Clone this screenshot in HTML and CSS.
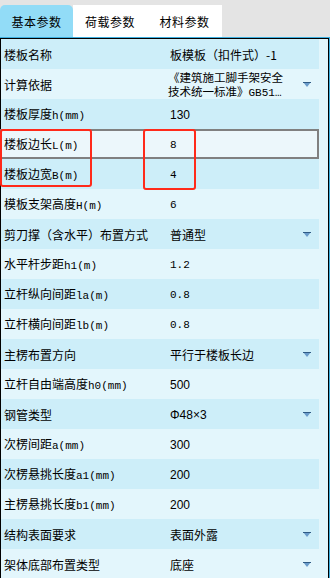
FILE: index.html
```html
<!DOCTYPE html>
<html>
<head>
<meta charset="utf-8">
<link rel="stylesheet" href="styles.css">
</head>
<body>
<div class="page">
  <div class="tabs">
    <div class="tab active">基本参数</div>
    <div class="tab">荷载参数</div>
    <div class="tab">材料参数</div>
  </div>
  <div class="frame">
    <div class="panel">
      <div class="row dark"><div class="label">楼板名称</div><div class="value">板模板（扣件式）-1</div></div>
      <div class="row light"><div class="label">计算依据</div><div class="value two"><div class="ln">《建筑施工脚手架安全</div><div class="ln">技术统一标准》<span class="m">GB51…</span></div></div><svg class="arrow" viewBox="0 0 8 5" width="8" height="5"><polygon points="0,0 8,0 4,5" fill="#6a9ccb"/><rect x="0" y="0" width="8" height="1" fill="#2f5b85"/></svg></div>
      <div class="row dark"><div class="label">楼板厚度<span class="m">h(mm)</span></div><div class="value s">130</div></div>
      <div class="row sel"><div class="label">楼板边长<span class="m">L(m)</span></div><div class="value m">8</div></div>
      <div class="row dark"><div class="label">楼板边宽<span class="m">B(m)</span></div><div class="value m">4</div></div>
      <div class="row light"><div class="label">模板支架高度<span class="m">H(m)</span></div><div class="value m">6</div></div>
      <div class="row dark"><div class="label">剪刀撑（含水平）布置方式</div><div class="value">普通型</div><svg class="arrow" viewBox="0 0 8 5" width="8" height="5"><polygon points="0,0 8,0 4,5" fill="#6a9ccb"/><rect x="0" y="0" width="8" height="1" fill="#2f5b85"/></svg></div>
      <div class="row light"><div class="label">水平杆步距<span class="m">h1(m)</span></div><div class="value m">1.2</div></div>
      <div class="row dark"><div class="label">立杆纵向间距<span class="m">la(m)</span></div><div class="value m">0.8</div></div>
      <div class="row light"><div class="label">立杆横向间距<span class="m">lb(m)</span></div><div class="value m">0.8</div></div>
      <div class="row dark"><div class="label">主楞布置方向</div><div class="value">平行于楼板长边</div><svg class="arrow" viewBox="0 0 8 5" width="8" height="5"><polygon points="0,0 8,0 4,5" fill="#6a9ccb"/><rect x="0" y="0" width="8" height="1" fill="#2f5b85"/></svg></div>
      <div class="row light"><div class="label">立杆自由端高度<span class="m">h0(mm)</span></div><div class="value s">500</div></div>
      <div class="row dark"><div class="label">钢管类型</div><div class="value s">Φ48×3</div><svg class="arrow" viewBox="0 0 8 5" width="8" height="5"><polygon points="0,0 8,0 4,5" fill="#6a9ccb"/><rect x="0" y="0" width="8" height="1" fill="#2f5b85"/></svg></div>
      <div class="row light"><div class="label">次楞间距<span class="m">a(mm)</span></div><div class="value s">300</div></div>
      <div class="row dark"><div class="label">次楞悬挑长度<span class="m">a1(mm)</span></div><div class="value s">200</div></div>
      <div class="row light"><div class="label">主楞悬挑长度<span class="m">b1(mm)</span></div><div class="value s">200</div></div>
      <div class="row dark"><div class="label">结构表面要求</div><div class="value">表面外露</div><svg class="arrow" viewBox="0 0 8 5" width="8" height="5"><polygon points="0,0 8,0 4,5" fill="#6a9ccb"/><rect x="0" y="0" width="8" height="1" fill="#2f5b85"/></svg></div>
      <div class="row light"><div class="label">架体底部布置类型</div><div class="value">底座</div><svg class="arrow" viewBox="0 0 8 5" width="8" height="5"><polygon points="0,0 8,0 4,5" fill="#6a9ccb"/><rect x="0" y="0" width="8" height="1" fill="#2f5b85"/></svg></div>
    </div>
  </div>
  <div class="mark mark-label"></div>
  <div class="mark mark-value"></div>
</div>
</body>
</html>
```
FILE: styles.css
```css
html, body {
  margin: 0;
  padding: 0;
}
body {
  background: #e4e4e4;
  font-family: "Noto Sans CJK SC", "Liberation Sans", sans-serif;
  font-size: 12px;
  color: #000;
  overflow: hidden;
}
.page {
  position: relative;
  width: 330px;
  height: 578px;
  overflow: hidden;
}
.tabs {
  display: flex;
  padding-top: 5px;
  height: 32px;
}
.tab {
  width: 74px;
  height: 32px;
  background: #fff;
  display: flex;
  align-items: center;
  justify-content: center;
  font-size: 12px;
  letter-spacing: 0.5px;
}
.tab.active {
  width: 73px;
  background: #92dcf7;
  border-radius: 5px 5px 0 0;
}
.tab:last-child {
  width: 75px;
}
.frame {
  border-top: 1px solid #3cafe0;
  border-right: 1px solid #3cafe0;
  width: 329px;
}
.panel {
  border: 1px solid #000;
  border-bottom: none;
  background: #e3f6fc;
  width: 327px;
  height: 560px;
}
.row {
  width: 318px;
  height: 30px;
  display: flex;
  align-items: center;
  box-sizing: border-box;
  padding-left: 3px;
  padding-right: 8px;
}
.row.dark { background: #cdeef9; }
.row.light { background: #e3f6fc; }
.row.sel {
  background: #ecf7fb;
  outline: 2px solid #808080;
  outline-offset: -2px;
  margin-left: -1px;
  width: 319px;
  padding-left: 4px;
}
.label {
  width: 166px;
  flex: none;
  white-space: nowrap;
  line-height: 16px;
  padding-top: 1px;
}
.value {
  flex: 1;
  white-space: nowrap;
  line-height: 16px;
  padding-top: 1px;
}
.value.two {
  display: flex;
  flex-direction: column;
  margin-left: -2px;
  padding-top: 0;
}
.ln {
  height: 14px;
  line-height: 14px;
  font-size: 11.5px;
}
.m {
  font-family: "Liberation Mono", "DejaVu Sans Mono", monospace;
  font-size: 11px;
}
.value.s {
  font-family: "Liberation Sans", sans-serif;
  font-size: 12px;
}
.arrow {
  flex: none;
  display: block;
}
.mark {
  position: absolute;
  border: 2.5px solid #ff2a1a;
  border-radius: 3px;
  box-sizing: border-box;
}
.mark-label {
  left: 0;
  top: 129px;
  width: 92px;
  height: 58px;
}
.mark-value {
  left: 143px;
  top: 129px;
  width: 53px;
  height: 61px;
}
```
